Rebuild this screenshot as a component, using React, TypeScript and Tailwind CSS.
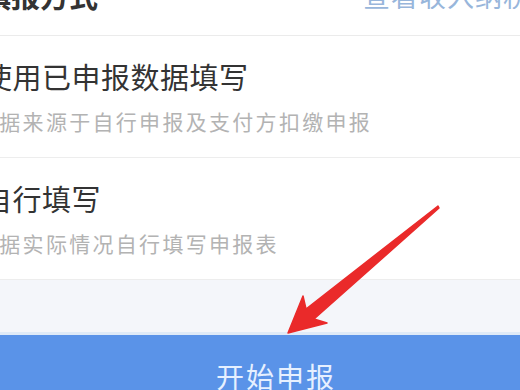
import type { ReactNode } from "react";

const cjk = { fontFamily: '"Noto Sans CJK SC", "Noto Sans", sans-serif' };

function Option({ title, desc }: { title: string; desc: string }) {
  return (
    <div className="flex flex-col border-b border-[#ededed] pt-[26px] pb-[25px]">
      <p className="ml-[-17px] whitespace-nowrap text-[29px] leading-none tracking-[0.5px] text-[#333333]">{title}</p>
      <p className="ml-[-24px] mt-[20px] whitespace-nowrap text-[21px] leading-none tracking-[2.3px] text-[#b3b3b3]">
        {desc}
      </p>
    </div>
  );
}

function Arrow() {
  return (
    <svg className="pointer-events-none absolute left-0 top-0" width="520" height="390" viewBox="0 0 520 390">
      <polygon
        points="438,206 306,309 303,296 288,333 327,323 314,319 439,208"
        fill="#ea2a2a"
        stroke="#ea2a2a"
        strokeWidth="1.5"
        strokeLinejoin="round"
      />
    </svg>
  );
}

function Shell({ children }: { children: ReactNode }) {
  return (
    <div className="relative flex h-[390px] w-[520px] flex-col overflow-hidden bg-[#f4f6fa]" style={cjk}>
      {children}
    </div>
  );
}

export default function App() {
  return (
    <Shell>
      <div className="bg-white">
        <div className="flex h-[36px] items-start justify-between border-b border-[#ebebeb]">
          <p className="ml-[-18px] mt-[-19px] whitespace-nowrap text-[29px] font-bold leading-none text-[#333333]">
            填报方式
          </p>
          <p className="mt-[-18px] w-[157px] shrink-0 overflow-hidden whitespace-nowrap text-[27px] leading-none tracking-[1px] text-[#98b6db]">
            查看收入纳税明细
          </p>
        </div>
        <Option title="使用已申报数据填写" desc="数据来源于自行申报及支付方扣缴申报" />
        <Option title="自行填写" desc="根据实际情况自行填写申报表" />
      </div>
      <div className="flex-1" />
      <div className="h-[3px] bg-[#dfeaf7]" />
      <button className="h-[55px] bg-[#5a93e8] pt-[26px] pl-[32px] text-[28px] leading-none tracking-[2px] text-[#e6f0ff]">
        开始申报
      </button>
      <Arrow />
    </Shell>
  );
}
